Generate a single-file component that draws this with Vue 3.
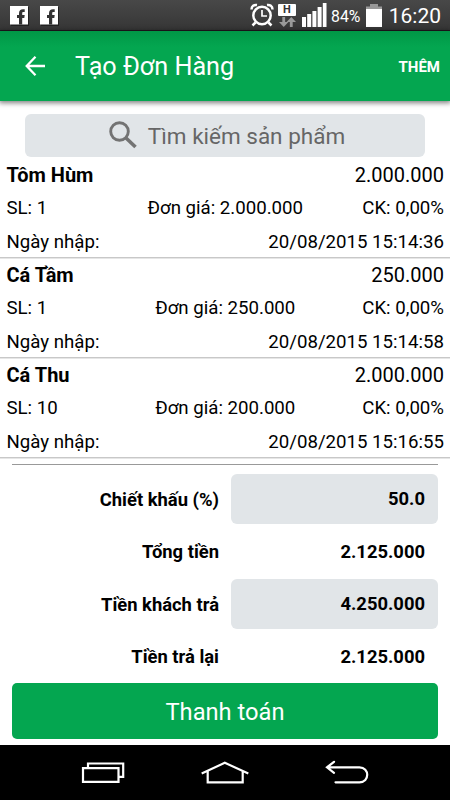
<script setup>
const items = [
  { name: 'Tôm Hùm', total: '2.000.000', qty: 1, price: '2.000.000', date: '20/08/2015 15:14:36' },
  { name: 'Cá Tầm', total: '250.000', qty: 1, price: '250.000', date: '20/08/2015 15:14:58' },
  { name: 'Cá Thu', total: '2.000.000', qty: 10, price: '200.000', date: '20/08/2015 15:16:55' },
]
const totals = [
  { label: 'Chiết khấu (%)', value: '50.0', field: true },
  { label: 'Tổng tiền', value: '2.125.000', field: false },
  { label: 'Tiền khách trả', value: '4.250.000', field: true },
  { label: 'Tiền trả lại', value: '2.125.000', field: false },
]
</script>

<template>
  <div class="screen">
    <header class="status">
      <div class="notices">
        <svg v-for="n in 2" :key="n" class="fb" viewBox="0 0 19 20">
          <rect x="1" y="1" width="18" height="19" fill="#222" />
          <rect width="18" height="18.5" fill="#fff" />
          <path d="M9 18.500V12H7V9h2V7.300C9 4.500 10.500 3.200 13 3.200h1.700v2.900h-1.200c-1 0-1.300.4-1.300 1.400V9h2.500l-.4 3h-2.100v6.500z" fill="#333" />
        </svg>
      </div>
      <svg class="alarm" viewBox="0 0 24 24" fill="none" stroke="#fff">
        <circle cx="12" cy="12.500" r="8.700" stroke-width="2.500" />
        <path d="M12 7v6h5" stroke-width="1.700" />
        <path d="M1.500 6.500C1.500 3 4 1.500 7 2M22.500 6.500C22.500 3 20 1.500 17 2" stroke-width="2.500" />
        <path d="M5.500 19.500l-3 3M18.500 19.500l3 3" stroke-width="2.500" />
      </svg>
      <div class="data">
        <span class="net">H</span>
        <svg class="arrows" viewBox="0 0 18 10" fill="#999" preserveAspectRatio="none">
          <path d="M3.500 0h3v5H10L5 10 0 5h3.500zM11.500 10h3V5H18L13 0 8 5h3.500z" />
        </svg>
      </div>
      <svg class="signal" viewBox="0 0 25 24" fill="#fff">
        <path d="M0 14h4v10H0zM5.200 11h4v13h-4zM10.400 8h4v16h-4zM15.600 4h4v20h-4zM20.800 0h3.700v24h-3.700z" />
      </svg>
      <span class="percent">84%</span>
      <svg class="battery" viewBox="0 0 16 23">
        <path d="M4 0h8v2.500h4V6H0V2.500h4z" fill="#999" />
        <path d="M0 5h16v18H0z" fill="#fff" />
      </svg>
      <span class="clock">16:20</span>
    </header>

    <nav class="appbar">
      <svg class="back" viewBox="0 0 20 20" fill="none" stroke="#fff" stroke-width="2.300">
        <path d="M10.500 .8L1.700 10l8.800 9.200M1.700 10H20" />
      </svg>
      <h1>Tạo Đơn Hàng</h1>
      <span class="add">THÊM</span>
    </nav>

    <main>
      <div class="search">
        <svg class="lens" viewBox="0 0 28 28" fill="none" stroke="#737373">
          <circle cx="10.500" cy="10.500" r="8.800" stroke-width="2.900" />
          <path d="M17 17l9.500 9" stroke-width="3.600" />
        </svg>
        <span>Tìm kiếm sản phẩm</span>
      </div>
      <section class="items">
        <article v-for="item in items" :key="item.name" class="item">
          <div class="line top"><b>{{ item.name }}</b><span class="sum">{{ item.total }}</span></div>
          <div class="line three">
            <span class="qty">SL: {{ item.qty }}</span>
            <span class="price">Đơn giá: {{ item.price }}</span>
            <span class="disc">CK: 0,00%</span>
          </div>
          <div class="line last"><span class="entry">Ngày nhập:</span><span class="date">{{ item.date }}</span></div>
        </article>
      </section>
      <section class="totals">
        <div v-for="row in totals" :key="row.label" class="total">
          <span class="label">{{ row.label }}</span>
          <span class="value" :class="{ field: row.field }">{{ row.value }}</span>
        </div>
      </section>
      <button class="pay">Thanh toán</button>
    </main>

    <footer class="softkeys">
      <svg class="keys" viewBox="0 0 450 55" fill="none" stroke="#fff" stroke-width="2.200">
        <path d="M83 23.200h35.500v13.600H83zM88 23v-4.500h35.200v13.300H119" />
        <path d="M201.700 28.500L224.800 17.800l23.500 10.700M207.700 26v11.300h35V26" />
        <path d="M334 16.800L327 22.300l7 5.500M327 22.300h32.500c10.300 0 10.300 15 0 15H335.500" stroke-linecap="round" />
      </svg>
    </footer>
  </div>
</template>

<style>
body { margin: 0; }
</style>

<style scoped>
.screen {
  width: 450px;
  height: 800px;
  display: flex;
  flex-direction: column;
  overflow: hidden;
  background: #fff;
  color: #000;
  font-family: Roboto, "Noto Sans", sans-serif;
}
.status {
  height: 31px;
  flex: none;
  box-sizing: border-box;
  display: flex;
  align-items: flex-start;
  background: linear-gradient(#484848, #363636);
  border-bottom: 1px solid #201820;
  color: #fff;
}
.notices { display: flex; gap: 11px; margin: 6px auto 0 10px; }
.fb { width: 19px; height: 20px; }
.alarm { width: 24px; height: 24px; margin: 3px 0 0 0; }
.data { width: 18px; margin: 4px 0 0 4px; display: flex; flex-direction: column; align-items: center; }
.net {
  width: 18px;
  height: 12px;
  border-radius: 1px;
  background: #fff;
  color: #333;
  font-size: 11px;
  font-weight: 700;
  line-height: 12px;
  text-align: center;
}
.arrows { width: 17px; height: 10px; margin-top: 1px; }
.signal { width: 25px; height: 24px; margin: 3px 0 0 6px; }
.percent { width: 31px; margin: 6px 0 0 4px; font-size: 15.800px; line-height: 21px; white-space: nowrap; }
.battery { width: 16px; height: 23px; margin: 4px 0 0 4px; }
.clock { width: 55px; margin: 3px 9px 0 4px; font-size: 21px; line-height: 27px; text-align: right; }
.appbar {
  height: 70px;
  flex: none;
  box-sizing: border-box;
  display: flex;
  align-items: center;
  padding: 0 10px 0 25px;
  background: linear-gradient(#009746, #04a650 16px);
  box-shadow: 0 1px 5px 1px rgba(0, 0, 0, .5);
  color: #fff;
  position: relative;
}
.back { width: 20px; height: 20px; margin-right: 30px; }
h1 { flex: 1; margin: 0; padding-top: 2px; font-size: 25.200px; font-weight: 400; line-height: 32px; }
.add { padding-top: 1px; font-size: 15px; font-weight: 700; }
main { flex: 1; min-height: 0; display: flex; flex-direction: column; }
.search {
  height: 43px;
  flex: none;
  margin: 13px 25px 0;
  padding-left: 4px;
  box-sizing: border-box;
  display: flex;
  align-items: center;
  justify-content: center;
  gap: 11px;
  border-radius: 6px;
  background: #e1e5e8;
  color: #666;
  font-size: 22.500px;
}
.search span { padding-top: 1px; }
.lens { width: 28px; height: 28px; margin-top: -2px; }
.items { flex: none; margin-top: 1px; }
.item {
  height: 100px;
  box-sizing: border-box;
  border-bottom: 1px solid #c8c8c8;
  box-shadow: 0 1px 0 #e6e6e6;
  padding: 0 6px 0 6.500px;
}
.line { height: 33.300px; display: flex; justify-content: space-between; align-items: center; font-size: 18.650px; white-space: nowrap; }
.top { font-size: 20px; }
.three { display: grid; grid-template-columns: 1fr auto 1fr; }
.last { height: 34.700px; }
.disc { text-align: right; }
.totals {
  flex: none;
  margin: 6px 12px 0;
  padding-top: 9px;
  border-top: 1px solid #999;
  display: flex;
  flex-direction: column;
  gap: 2.600px;
}
.total { height: 50px; display: grid; grid-template-columns: 207px 207px; gap: 12px; align-items: center; font-size: 18.400px; font-weight: 700; text-align: right; }
.value { height: 50px; box-sizing: border-box; padding-right: 13px; line-height: 50px; border-radius: 6px; }
.field { background: #e1e5e8; }
.pay {
  height: 56px;
  flex: none;
  margin: 1px 12px 0;
  padding: 2px 0 0 0;
  border: 0;
  border-radius: 5px;
  background: #04a650;
  color: #fff;
  font-family: inherit;
  font-size: 23.700px;
}
.softkeys { height: 55px; flex: none; background: #000; }
.keys { display: block; width: 450px; height: 55px; }
</style>
